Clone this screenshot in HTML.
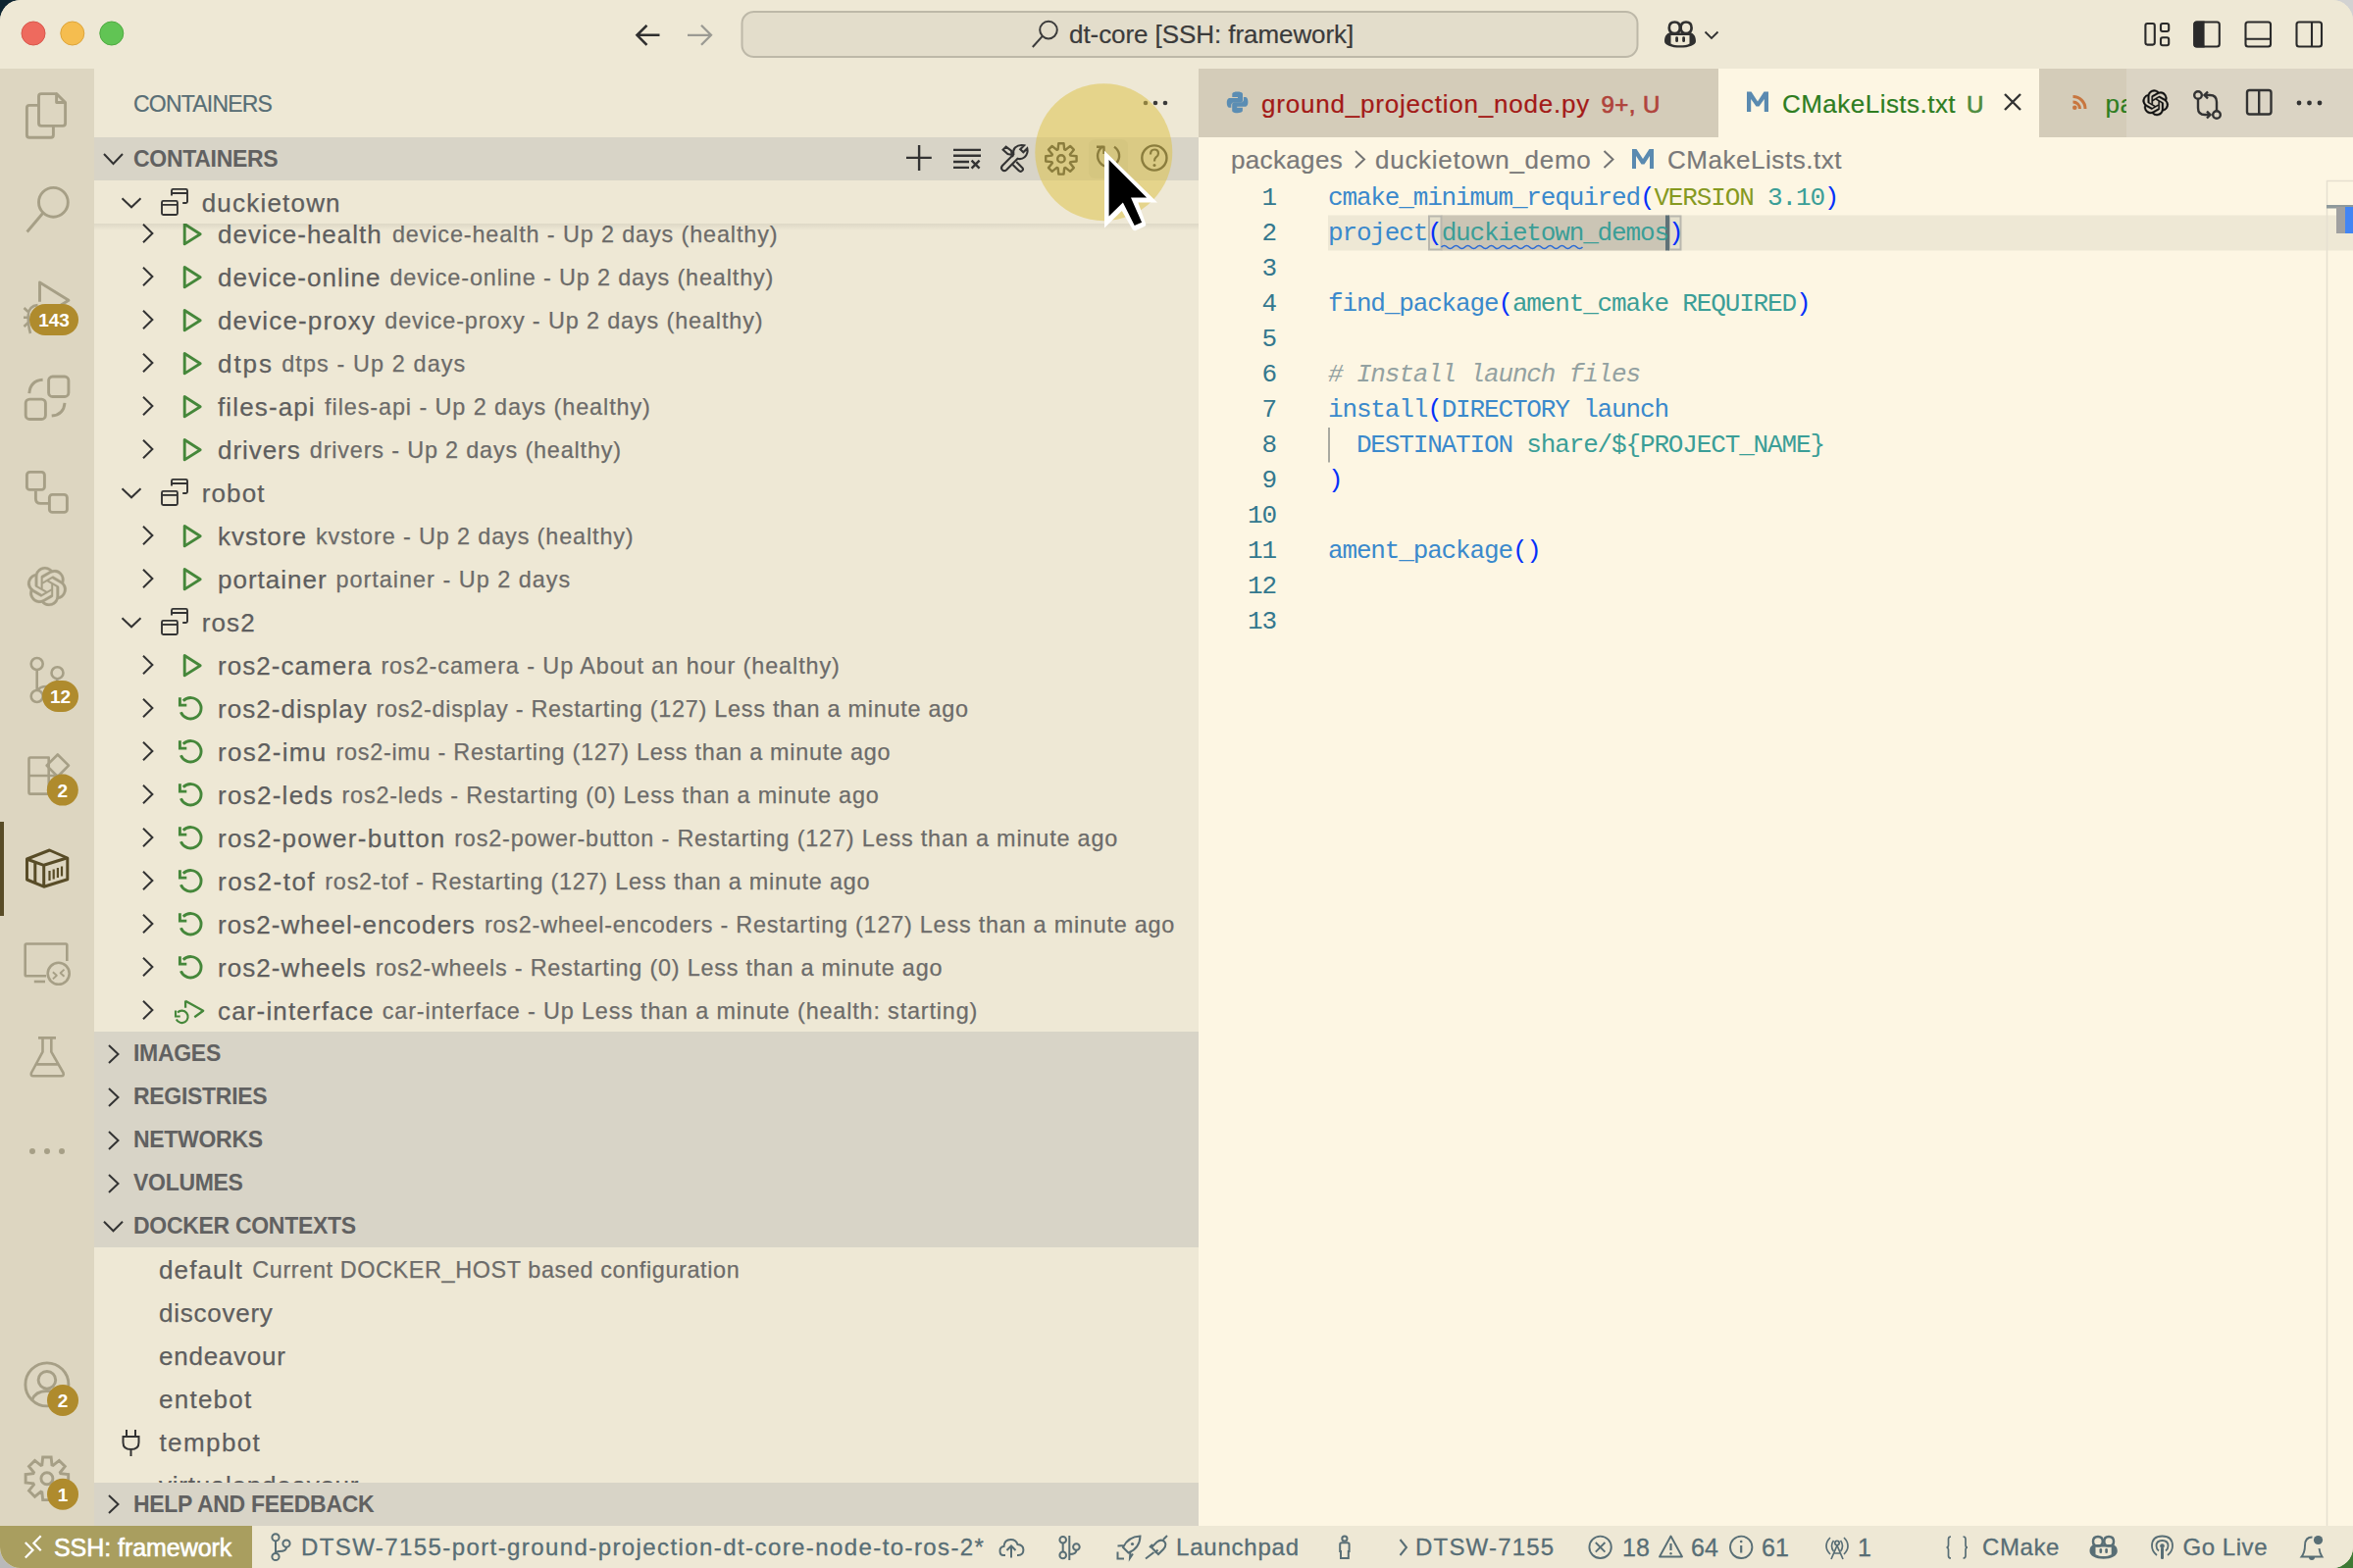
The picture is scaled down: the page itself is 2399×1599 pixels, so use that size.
<!DOCTYPE html>
<html><head><meta charset="utf-8">
<style>
html,body{margin:0;padding:0;}
body{width:2399px;height:1599px;overflow:hidden;position:relative;background:#c9c9c9;font-family:"Liberation Sans",sans-serif;}
.win{position:absolute;left:0;top:0;width:2399px;height:1599px;border-radius:21px;overflow:hidden;background:#EEE8D5;}
.abs{position:absolute;}
.t{position:absolute;white-space:nowrap;-webkit-text-stroke:0.2px currentColor;}
#titlebar{left:0;top:0;width:2399px;height:70px;background:#EEE8D5;}
#actbar{left:0;top:70px;width:96px;height:1486px;background:#DDD6C1;}
#sidebar{left:96px;top:70px;width:1126px;height:1486px;background:#EEE8D5;}
#editor{left:1222px;top:70px;width:1177px;height:1486px;background:#FDF6E3;}
#tabs{left:1222px;top:70px;width:1177px;height:70px;background:#DBD4C2;}
#status{left:0;top:1556px;width:2399px;height:43px;background:#EEE8D5;}
.sech{position:absolute;left:96px;width:1126px;height:44px;background:#D8D4C7;}
.sech .lbl{position:absolute;left:40px;top:0;line-height:44px;font-size:23px;font-weight:bold;color:#616161;letter-spacing:-0.3px;}
.row{position:absolute;left:96px;width:1126px;height:44px;line-height:44px;font-size:26px;color:#5E5E5E;white-space:nowrap;-webkit-text-stroke:0.25px currentColor;}
.row .l{position:absolute;top:1px;letter-spacing:0.75px;}
.row .dd{font-size:23.4px;line-height:45.8px;opacity:0.9;}
.row .d{font-size:23.4px;letter-spacing:0.8px;opacity:0.9;margin-left:11px;}
.code{position:absolute;left:1354px;font-family:"Liberation Mono",monospace;font-size:26px;letter-spacing:-1.15px;line-height:36px;white-space:pre;color:#657B83;}
.ln{position:absolute;left:1222px;width:80px;text-align:right;font-family:"Liberation Mono",monospace;font-size:26px;letter-spacing:-1.15px;line-height:36px;color:#34788E;}
.code .fn{color:#3A89CC}.code .br{color:#0431FA}.code .kw{color:#86991F}.code .nu{color:#3B9E97}.code .cm{color:#93A1A1;font-style:italic}
.st{position:absolute;top:1556px;line-height:44px;font-size:24px;color:#586E75;white-space:nowrap;-webkit-text-stroke:0.3px currentColor;}
</style></head>
<body>
<div class="abs" style="left:0;top:0;width:40px;height:40px;background:#0E2531"></div>
<div class="abs" style="left:2359px;top:0;width:40px;height:40px;background:#D2D2D2"></div>
<div class="abs" style="left:0;top:1559px;width:40px;height:40px;background:#B9B9B9"></div>
<div class="abs" style="left:2359px;top:1559px;width:40px;height:40px;background:#3E7A34"></div>
<div class="win">
<div id="titlebar" class="abs"></div>
<div id="actbar" class="abs"></div>
<div id="sidebar" class="abs"></div>
<div id="editor" class="abs"></div>
<div id="tabs" class="abs"></div>
<div id="status" class="abs"></div>
<!-- TITLE BAR -->
<svg class="abs" style="left:0;top:0" width="2399" height="70" viewBox="0 0 2399 70">
 <circle cx="34" cy="34" r="12" fill="#EE6A5E" stroke="#D8584D" stroke-width="1"/>
 <circle cx="73.8" cy="34" r="12" fill="#F5BD4F" stroke="#DDA43A" stroke-width="1"/>
 <circle cx="113.8" cy="34" r="12" fill="#61C454" stroke="#4EAA40" stroke-width="1"/>
 <g fill="none" stroke="#2F2F2F" stroke-width="2.6" stroke-linecap="butt">
  <path d="M672.5 35.8 H650 M659.5 25.8 L649.5 35.8 L659.5 45.8"/>
 </g>
 <g fill="none" stroke="#9B9A93" stroke-width="2.3">
  <path d="M701 35.8 H724.5 M715 25.8 L725 35.8 L715 45.8"/>
 </g>
 <rect x="756.5" y="12" width="913" height="46" rx="12" fill="#E3DDCB" stroke="#BDB8A8" stroke-width="2"/>
 <g fill="none" stroke="#3B3B3B" stroke-width="2">
  <circle cx="1069" cy="30.6" r="8.8"/>
  <path d="M1062.8 36.8 L1052.8 48"/>
 </g>
 <!-- copilot -->
 <g fill="#303030">
  <path d="M1697 42 C1697 35 1701 33.5 1703 33.5 L1723 33.5 C1725 33.5 1729 35 1729 42 C1729 46 1722 48.6 1713 48.6 C1704 48.6 1697 46 1697 42 Z M1703.5 36 V44.5 C1706 46 1709 46.3 1713 46.3 C1717 46.3 1720 46 1722.5 44.5 V36 Z"/>
  <rect x="1708.2" y="37.3" width="2.8" height="5.8" rx="1.4"/>
  <rect x="1715.2" y="37.3" width="2.8" height="5.8" rx="1.4"/>
 </g>
 <g fill="none" stroke="#303030" stroke-width="2.7">
  <path d="M1707.5 22.5 C1711.5 22.5 1712.8 24.5 1712.8 28.5 C1712.8 32.5 1711 34 1707.5 34 C1703.8 34 1701.8 32.5 1701.8 28.5 C1701.8 24.5 1703.5 22.5 1707.5 22.5 Z"/>
  <path d="M1719 22.5 C1723 22.5 1724.6 24.5 1724.6 28.5 C1724.6 32.5 1722.6 34 1719 34 C1715.5 34 1713.6 32.5 1713.6 28.5 C1713.6 24.5 1715 22.5 1719 22.5 Z"/>
 </g>
 <path d="M1738.5 32.5 L1745 39 L1751.5 32.5" fill="none" stroke="#303030" stroke-width="1.8"/>
 <!-- layout icons -->
 <g fill="none" stroke="#2A2A2A" stroke-width="2.1">
  <rect x="2187.4" y="24" width="9.4" height="21.6" rx="2"/>
  <rect x="2203" y="24" width="8.2" height="8" rx="2"/>
  <rect x="2203" y="38.2" width="8.2" height="8" rx="2"/>
  <rect x="2237.3" y="22.5" width="25.5" height="25" rx="2.5"/>
  <rect x="2289.5" y="22.5" width="25.5" height="25" rx="2.5"/>
  <path d="M2289.5 39.7 H2315"/>
  <rect x="2341.5" y="22.5" width="25.5" height="25" rx="2.5"/>
  <path d="M2357 22.5 V47.5"/>
 </g>
 <path d="M2247.6 21.5 H2239.8 Q2236.3 21.5 2236.3 25 V45 Q2236.3 48.5 2239.8 48.5 H2247.6 Z" fill="#2A2A2A"/>
</svg>
<div class="t" style="left:1090px;top:0;line-height:71px;font-size:26px;color:#3B3B3B;letter-spacing:-0.07px">dt-core [SSH: framework]</div>

<!-- ACTIVITY BAR -->
<svg class="abs" style="left:0;top:70px" width="96" height="1486" viewBox="0 70 96 1486">
 <g fill="none" stroke="#A69F86" stroke-width="2.9" stroke-linejoin="round">
  <!-- explorer -->
  <path d="M39.5 107.4 H30 Q27.4 107.4 27.4 110 V137.7 Q27.4 140.3 30 140.3 H51.8 Q54.4 140.3 54.4 137.7 V128.4"/>
  <path d="M57.6 95.6 H42.1 Q39.5 95.6 39.5 98.2 V125.8 Q39.5 128.4 42.1 128.4 H64 Q66.6 128.4 66.6 125.8 V104.5 L57.6 95.6 V104.5 H66.6"/>
  <!-- search -->
  <circle cx="54.4" cy="206.3" r="14.9"/>
  <path d="M43.8 217.3 L27.6 236.5"/>
  <!-- run/debug -->
  <path d="M40.5 307.8 V288 L70 306.2 L54 316"/>
  <path d="M38.5 311 Q29.5 312 28.8 321 Q28.5 332 31 340" stroke-width="2.6"/>
  <path d="M24.5 314 L28.8 318 M24 323.8 H28.8 M24.5 333 L28.8 329" stroke-width="2.6"/>
  <!-- two squares with arcs -->
  <rect x="49.6" y="384" width="20.3" height="20.5" rx="4"/>
  <rect x="26.2" y="407.1" width="20.2" height="20.4" rx="4"/>
  <path d="M43.6 387.3 Q31 388 29.8 401.1"/>
  <path d="M66 410.8 Q65 423 52.7 424"/>
  <!-- hierarchy -->
  <rect x="27.4" y="481.4" width="18" height="18" rx="3"/>
  <rect x="50.4" y="504.4" width="18" height="18" rx="3"/>
  <path d="M36.4 500.6 V508.4 Q36.4 513.4 41.4 513.4 H50.4"/>
  <!-- chatgpt -->
  <path transform="translate(27.9,578) scale(1.667)" fill="#A69F86" stroke="#A69F86" stroke-width="0.15" d="M22.2819 9.8211a5.9847 5.9847 0 0 0-.5157-4.9108 6.0462 6.0462 0 0 0-6.5098-2.9A6.0651 6.0651 0 0 0 4.9807 4.1818a5.9847 5.9847 0 0 0-3.9977 2.9 6.0462 6.0462 0 0 0 .7427 7.0966 5.98 5.98 0 0 0 .511 4.9107 6.051 6.051 0 0 0 6.5146 2.9001A5.9847 5.9847 0 0 0 13.2599 24a6.0557 6.0557 0 0 0 5.7718-4.2058 5.9894 5.9894 0 0 0 3.9977-2.9001 6.0557 6.0557 0 0 0-.7475-7.0729zm-9.022 12.6081a4.4755 4.4755 0 0 1-2.8764-1.0408l.1419-.0804 4.7783-2.7582a.7948.7948 0 0 0 .3927-.6813v-6.7369l2.02 1.1686a.071.071 0 0 1 .038.052v5.5826a4.504 4.504 0 0 1-4.4945 4.4944zm-9.6607-4.1254a4.4708 4.4708 0 0 1-.5346-3.0137l.142.0852 4.783 2.7582a.7712.7712 0 0 0 .7806 0l5.8428-3.3685v2.3324a.0804.0804 0 0 1-.0332.0615L9.74 19.9502a4.4992 4.4992 0 0 1-6.1408-1.6464zM2.3408 7.8956a4.485 4.485 0 0 1 2.3655-1.9728V11.6a.7664.7664 0 0 0 .3879.6765l5.8144 3.3543-2.0201 1.1685a.0757.0757 0 0 1-.071 0l-4.8303-2.7865A4.504 4.504 0 0 1 2.3408 7.872zm16.5963 3.8558L13.1038 8.364 15.1192 7.2a.0757.0757 0 0 1 .071 0l4.8303 2.7913a4.4944 4.4944 0 0 1-.6765 8.1042v-5.6772a.79.79 0 0 0-.407-.667zm2.0107-3.0231l-.142-.0852-4.7735-2.7818a.7759.7759 0 0 0-.7854 0L9.409 9.2297V6.8974a.0662.0662 0 0 1 .0284-.0615l4.8303-2.7866a4.4992 4.4992 0 0 1 6.6802 4.66zM8.3065 12.863l-2.02-1.1638a.0804.0804 0 0 1-.038-.0567V6.0742a4.4992 4.4992 0 0 1 7.3757-3.4537l-.142.0805L8.704 5.459a.7948.7948 0 0 0-.3927.6813zm1.0976-2.3654l2.602-1.4998 2.6069 1.4998v2.9994l-2.5974 1.4997-2.6067-1.4997Z" stroke-linejoin="round"/>
  <!-- source control -->
  <g stroke-width="2.6">
   <circle cx="37.7" cy="677" r="6"/>
   <circle cx="58.5" cy="686.2" r="6"/>
   <circle cx="37.7" cy="710" r="6"/>
   <path d="M37.7 683 V704 M58.5 692.2 Q58 700 48 700 Q40 700 39 704"/>
  </g>
  <!-- extensions -->
  <path d="M29.5 791 H49.7 V772.5 H31 Q29.5 772.5 29.5 774 V808 Q29.5 809.6 31 809.6 H67 V791 H49.7 V809.6" stroke-width="2.6"/>
  <path d="M58.8 769.5 L70 780.7 L58.8 792 L47.6 780.7 Z" stroke-width="2.6"/>
  <!-- remote explorer -->
  <path d="M47 995.3 H27 Q25.7 995.3 25.7 994 V963.8 Q25.7 962.5 27 962.5 H67 Q68.3 962.5 68.3 963.8 V980" stroke-width="2.6"/>
  <path d="M34.8 1001 H46" stroke-width="2.6"/>
  <circle cx="59.7" cy="992.8" r="11" stroke-width="2.6"/>
  <path d="M53.9 991.2 L57.8 994.8 L53.9 998.4 M65.5 988.6 L61.6 992.2 L65.5 995.8" stroke-width="1.9"/>
  <!-- flask -->
  <path d="M39 1058.4 H57 M43.5 1058.4 V1072.7 L32 1094 Q31 1097.3 34 1097.3 H62.5 Q65.5 1097.3 64.5 1094 L52.3 1072.7 V1058.4 M37 1085.4 H59" stroke-width="2.6"/>
  <!-- accounts -->
  <circle cx="47.9" cy="1411.9" r="22" stroke-width="2.9"/>
  <circle cx="47.9" cy="1407.3" r="8.8" stroke-width="2.9"/>
  <path d="M32.5 1428 Q36 1418.5 47.9 1418.5 Q59 1418.5 63 1426" stroke-width="2.9"/>
  <!-- gear -->
  <g transform="translate(47.9,1507.8)" stroke-width="2.9">
   <path d="M-5.06 -13.91 L-4.24 -21.79 L4.24 -21.79 L5.06 -13.91 L6.25 -13.41 L12.41 -18.40 L18.40 -12.41 L13.41 -6.25 L13.91 -5.06 L21.79 -4.24 L21.79 4.24 L13.91 5.06 L13.41 6.25 L18.40 12.41 L12.41 18.40 L6.25 13.41 L5.06 13.91 L4.24 21.79 L-4.24 21.79 L-5.06 13.91 L-6.25 13.41 L-12.41 18.40 L-18.40 12.41 L-13.41 6.25 L-13.91 5.06 L-21.79 4.24 L-21.79 -4.24 L-13.91 -5.06 L-13.41 -6.25 L-18.40 -12.41 L-12.41 -18.40 L-6.25 -13.41 Z" stroke-linejoin="miter"/>
   <circle cx="0" cy="0" r="6"/>
  </g>
 </g>
 <g fill="#A69F86">
  <circle cx="33" cy="1173.9" r="3"/><circle cx="48" cy="1173.9" r="3"/><circle cx="63" cy="1173.9" r="3"/>
 </g>
 <!-- docker active -->
 <rect x="0" y="838" width="4" height="96" fill="#584C27"/>
 <g fill="none" stroke="#584C27" stroke-width="3" stroke-linejoin="round">
  <path d="M50.5 867 L27.5 876 V897 L44.7 904.2 L68.8 896.7 V875 Z"/>
  <path d="M28.5 876.5 L44.7 882.3 L68 875 M44.7 882.3 V904 M35.8 879 V900"/>
  <path d="M50.5 888 V898 M54.7 886.5 V896.5 M58.9 885 V895 M63 883.5 V893.5" stroke-width="2.2"/>
 </g>
 <!-- badges -->
 <g fill="#AF8B2D">
  <rect x="30" y="310" width="50" height="32" rx="16"/>
  <rect x="43" y="694" width="37" height="32" rx="16"/>
  <circle cx="63.8" cy="805.6" r="16"/>
  <circle cx="64" cy="1428" r="16"/>
  <circle cx="64" cy="1523.8" r="16"/>
 </g>
 <g fill="#FFFFFF" font-family="Liberation Sans" font-weight="bold" font-size="19" text-anchor="middle">
  <text x="55" y="332.5">143</text>
  <text x="61.5" y="716.5">12</text>
  <text x="63.8" y="812.5">2</text>
  <text x="64" y="1435">2</text>
  <text x="64" y="1530.5">1</text>
 </g>
</svg>

<!-- SIDEBAR HEADERS -->
<div class="t" style="left:136px;top:70px;line-height:73px;font-size:23px;color:#586E75;letter-spacing:-0.8px">CONTAINERS</div>
<svg class="abs" style="left:1150px;top:90px" width="50" height="30" viewBox="1150 90 50 30"><g fill="#3A3A3A"><circle cx="1168" cy="105" r="2.3"/><circle cx="1178" cy="105" r="2.3"/><circle cx="1188" cy="105" r="2.3"/></g></svg>
<div class="sech" style="top:140px"><span class="lbl">CONTAINERS</span></div>
<div class="sech" style="top:1052px"><span class="lbl">IMAGES</span></div>
<div class="sech" style="top:1096px"><span class="lbl">REGISTRIES</span></div>
<div class="sech" style="top:1140px"><span class="lbl">NETWORKS</span></div>
<div class="sech" style="top:1184px"><span class="lbl">VOLUMES</span></div>
<div class="sech" style="top:1228px"><span class="lbl">DOCKER CONTEXTS</span></div>
<div class="row" style="top:1272px"><span class="l" style="left:66px;letter-spacing:1.12px">default</span><span class="l dd" style="left:161.3px;letter-spacing:0.62px">Current DOCKER_HOST based configuration</span></div>
<div class="row" style="top:1316px"><span class="l" style="left:66px">discovery</span></div>
<div class="row" style="top:1360px"><span class="l" style="left:66px">endeavour</span></div>
<div class="row" style="top:1404px"><span class="l" style="left:66px;letter-spacing:1.25px">entebot</span></div>
<div class="row" style="top:1448px"><span class="l" style="left:66.5px;letter-spacing:1.4px">tempbot</span></div>
<div class="row" style="top:1492px"><span class="l" style="left:66px">virtualendeavour</span></div>
<div class="sech" style="top:1512px"><span class="lbl">HELP AND FEEDBACK</span></div>
<svg class="abs" style="left:0;top:0" width="1222" height="1556" viewBox="0 0 1222 1556">
 <g fill="none" stroke="#333" stroke-width="2">
  <path d="M106 157 L115.5 167 L125 157"/>
  <path d="M111 1066 L120.5 1075 L111 1084"/>
  <path d="M111 1110 L120.5 1119 L111 1128"/>
  <path d="M111 1154 L120.5 1163 L111 1172"/>
  <path d="M111 1198 L120.5 1207 L111 1216"/>
  <path d="M106 1245.8 L115.5 1255.3 L125 1245.8"/>
  <path d="M111 1525 L120.5 1534 L111 1543"/>
 </g>
 <!-- plug icon tempbot -->
 <g fill="none" stroke="#333" stroke-width="2">
  <path d="M129 1458 V1465 M138 1458 V1465 M125.5 1465 H141.5 V1471 Q141.5 1478 133.5 1478 Q125.5 1478 125.5 1471 Z M133.5 1478 V1485"/>
 </g>
 <!-- header actions -->
 <g fill="none" stroke="#333" stroke-width="2.4">
  <path d="M937.1 148 V174 M924 160.9 H949.8"/>
  <path d="M972 152.9 H1000 M972 158.8 H1000 M972 165 H988 M972 170.9 H988 M990.6 163.7 L998.6 171.7 M998.6 163.7 L990.6 171.7"/>
  <g transform="translate(1034.5,161.5) scale(0.88) translate(-1034.5,-161.5)" stroke-width="2.4"><path d="M1045.5 146.5 L1041 151 L1044.5 154.5 L1049 150 Q1050.5 156 1046 160 Q1042.5 163 1038 161.8 L1025 174.8 Q1022.5 177 1020.2 174.8 Q1018 172.5 1020.2 170 L1033.2 157 Q1032 152.5 1035 149 Q1039.5 145 1045.5 146.5 Z" />
  <path d="M1021 151.5 L1024.5 148 L1030.5 152.5 L1031.5 157.5 L1026.5 156.5 Z M1030.5 157 L1033 159.5" />
  <path d="M1036.5 165.5 L1043.5 172.5 Q1045 174.5 1043 176 Q1041 177.5 1039.3 175.8 L1032.3 168.8" /></g>
 </g>
</svg>

<!-- SIDEBAR TREE -->
<div class="row" style="top:216px"><span class="l" style="left:126px;letter-spacing:1.01px">device-health</span><span class="l dd" style="left:303.9px;letter-spacing:0.88px">device-health - Up 2 days (healthy)</span></div>
<div class="row" style="top:260px"><span class="l" style="left:126px;letter-spacing:1.03px">device-online</span><span class="l dd" style="left:301.4px;letter-spacing:0.87px">device-online - Up 2 days (healthy)</span></div>
<div class="row" style="top:304px"><span class="l" style="left:126px;letter-spacing:1.14px">device-proxy</span><span class="l dd" style="left:296.3px;letter-spacing:0.88px">device-proxy - Up 2 days (healthy)</span></div>
<div class="row" style="top:348px"><span class="l" style="left:126px;letter-spacing:1.97px">dtps</span><span class="l dd" style="left:191.2px;letter-spacing:1.12px">dtps - Up 2 days</span></div>
<div class="row" style="top:392px"><span class="l" style="left:126px;letter-spacing:1.13px">files-api</span><span class="l dd" style="left:235.1px;letter-spacing:0.92px">files-api - Up 2 days (healthy)</span></div>
<div class="row" style="top:436px"><span class="l" style="left:126px;letter-spacing:0.95px">drivers</span><span class="l dd" style="left:219.8px;letter-spacing:0.84px">drivers - Up 2 days (healthy)</span></div>
<div class="row" style="top:480px"><span class="l" style="left:109.7px;letter-spacing:1.15px">robot</span></div>
<div class="row" style="top:524px"><span class="l" style="left:126px;letter-spacing:1.02px">kvstore</span><span class="l dd" style="left:226.0px;letter-spacing:0.88px">kvstore - Up 2 days (healthy)</span></div>
<div class="row" style="top:568px"><span class="l" style="left:126px;letter-spacing:1.01px">portainer</span><span class="l dd" style="left:246.5px;letter-spacing:1.01px">portainer - Up 2 days</span></div>
<div class="row" style="top:612px"><span class="l" style="left:109.7px;letter-spacing:1.15px">ros2</span></div>
<div class="row" style="top:656px"><span class="l" style="left:126px;letter-spacing:1.05px">ros2-camera</span><span class="l dd" style="left:292.4px;letter-spacing:0.92px">ros2-camera - Up About an hour (healthy)</span></div>
<div class="row" style="top:700px"><span class="l" style="left:126px;letter-spacing:1.06px">ros2-display</span><span class="l dd" style="left:287.5px;letter-spacing:0.74px">ros2-display - Restarting (127) Less than a minute ago</span></div>
<div class="row" style="top:744px"><span class="l" style="left:126px;letter-spacing:1.31px">ros2-imu</span><span class="l dd" style="left:246.5px;letter-spacing:0.73px">ros2-imu - Restarting (127) Less than a minute ago</span></div>
<div class="row" style="top:788px"><span class="l" style="left:126px;letter-spacing:1.27px">ros2-leds</span><span class="l dd" style="left:252.5px;letter-spacing:0.81px">ros2-leds - Restarting (0) Less than a minute ago</span></div>
<div class="row" style="top:832px"><span class="l" style="left:126px;letter-spacing:1.27px">ros2-power-button</span><span class="l dd" style="left:367.2px;letter-spacing:0.83px">ros2-power-button - Restarting (127) Less than a minute ago</span></div>
<div class="row" style="top:876px"><span class="l" style="left:126px;letter-spacing:1.49px">ros2-tof</span><span class="l dd" style="left:235.3px;letter-spacing:0.77px">ros2-tof - Restarting (127) Less than a minute ago</span></div>
<div class="row" style="top:920px"><span class="l" style="left:126px;letter-spacing:1.06px">ros2-wheel-encoders</span><span class="l dd" style="left:398.0px;letter-spacing:0.78px">ros2-wheel-encoders - Restarting (127) Less than a minute ago</span></div>
<div class="row" style="top:964px"><span class="l" style="left:126px;letter-spacing:1.07px">ros2-wheels</span><span class="l dd" style="left:286.7px;letter-spacing:0.79px">ros2-wheels - Restarting (0) Less than a minute ago</span></div>
<div class="row" style="top:1008px"><span class="l" style="left:126px;letter-spacing:1.16px">car-interface</span><span class="l dd" style="left:293.8px;letter-spacing:0.84px">car-interface - Up Less than a minute (health: starting)</span></div>
<svg class="abs" style="left:0;top:0" width="1222" height="1556" viewBox="0 0 1222 1556">
<g stroke="#333" stroke-width="2" fill="none"><path d="M146 228.7 L155.4 238 L146 247.3"/></g>
<path d="M188.2 228.5 V248.9 L204.2 238.7 Z" fill="none" stroke="#45873A" stroke-width="2.9" stroke-linejoin="round"/>
<g stroke="#333" stroke-width="2" fill="none"><path d="M146 272.7 L155.4 282 L146 291.3"/></g>
<path d="M188.2 272.5 V292.9 L204.2 282.7 Z" fill="none" stroke="#45873A" stroke-width="2.9" stroke-linejoin="round"/>
<g stroke="#333" stroke-width="2" fill="none"><path d="M146 316.7 L155.4 326 L146 335.3"/></g>
<path d="M188.2 316.5 V336.9 L204.2 326.7 Z" fill="none" stroke="#45873A" stroke-width="2.9" stroke-linejoin="round"/>
<g stroke="#333" stroke-width="2" fill="none"><path d="M146 360.7 L155.4 370 L146 379.3"/></g>
<path d="M188.2 360.5 V380.9 L204.2 370.7 Z" fill="none" stroke="#45873A" stroke-width="2.9" stroke-linejoin="round"/>
<g stroke="#333" stroke-width="2" fill="none"><path d="M146 404.7 L155.4 414 L146 423.3"/></g>
<path d="M188.2 404.5 V424.9 L204.2 414.7 Z" fill="none" stroke="#45873A" stroke-width="2.9" stroke-linejoin="round"/>
<g stroke="#333" stroke-width="2" fill="none"><path d="M146 448.7 L155.4 458 L146 467.3"/></g>
<path d="M188.2 448.5 V468.9 L204.2 458.7 Z" fill="none" stroke="#45873A" stroke-width="2.9" stroke-linejoin="round"/>
<g stroke="#333" stroke-width="2" fill="none"><path d="M124.5 498.3 L134.0 507.3 L143.5 498.3"/></g>
<g stroke="#333" stroke-width="1.9"><path d="M175 495.4 V490.4 Q175 488.9 176.5 488.9 H189.5 Q191 488.9 191 490.4 V501.5 Q191 503 189.5 503 H186.2 M175 493 H191" fill="none"/><rect x="165" y="500.9" width="15.9" height="14.1" rx="1.5" fill="none"/><path d="M165 504.9 H180.9"/></g>
<g stroke="#333" stroke-width="2" fill="none"><path d="M146 536.7 L155.4 546 L146 555.3"/></g>
<path d="M188.2 536.5 V556.9 L204.2 546.7 Z" fill="none" stroke="#45873A" stroke-width="2.9" stroke-linejoin="round"/>
<g stroke="#333" stroke-width="2" fill="none"><path d="M146 580.7 L155.4 590 L146 599.3"/></g>
<path d="M188.2 580.5 V600.9 L204.2 590.7 Z" fill="none" stroke="#45873A" stroke-width="2.9" stroke-linejoin="round"/>
<g stroke="#333" stroke-width="2" fill="none"><path d="M124.5 630.3 L134.0 639.3 L143.5 630.3"/></g>
<g stroke="#333" stroke-width="1.9"><path d="M175 627.4 V622.4 Q175 620.9 176.5 620.9 H189.5 Q191 620.9 191 622.4 V633.5 Q191 635 189.5 635 H186.2 M175 625 H191" fill="none"/><rect x="165" y="632.9" width="15.9" height="14.1" rx="1.5" fill="none"/><path d="M165 636.9 H180.9"/></g>
<g stroke="#333" stroke-width="2" fill="none"><path d="M146 668.7 L155.4 678 L146 687.3"/></g>
<path d="M188.2 668.5 V688.9 L204.2 678.7 Z" fill="none" stroke="#45873A" stroke-width="2.9" stroke-linejoin="round"/>
<g stroke="#333" stroke-width="2" fill="none"><path d="M146 712.7 L155.4 722 L146 731.3"/></g>
<path d="M184.4 726.2 A10.7 10.7 0 1 0 186.8 714.7" fill="none" stroke="#45873A" stroke-width="2.9"/>
<path d="M183.4 711.2 V719.1 H190.3" fill="none" stroke="#45873A" stroke-width="2.9"/>
<g stroke="#333" stroke-width="2" fill="none"><path d="M146 756.7 L155.4 766 L146 775.3"/></g>
<path d="M184.4 770.2 A10.7 10.7 0 1 0 186.8 758.7" fill="none" stroke="#45873A" stroke-width="2.9"/>
<path d="M183.4 755.2 V763.1 H190.3" fill="none" stroke="#45873A" stroke-width="2.9"/>
<g stroke="#333" stroke-width="2" fill="none"><path d="M146 800.7 L155.4 810 L146 819.3"/></g>
<path d="M184.4 814.2 A10.7 10.7 0 1 0 186.8 802.7" fill="none" stroke="#45873A" stroke-width="2.9"/>
<path d="M183.4 799.2 V807.1 H190.3" fill="none" stroke="#45873A" stroke-width="2.9"/>
<g stroke="#333" stroke-width="2" fill="none"><path d="M146 844.7 L155.4 854 L146 863.3"/></g>
<path d="M184.4 858.2 A10.7 10.7 0 1 0 186.8 846.7" fill="none" stroke="#45873A" stroke-width="2.9"/>
<path d="M183.4 843.2 V851.1 H190.3" fill="none" stroke="#45873A" stroke-width="2.9"/>
<g stroke="#333" stroke-width="2" fill="none"><path d="M146 888.7 L155.4 898 L146 907.3"/></g>
<path d="M184.4 902.2 A10.7 10.7 0 1 0 186.8 890.7" fill="none" stroke="#45873A" stroke-width="2.9"/>
<path d="M183.4 887.2 V895.1 H190.3" fill="none" stroke="#45873A" stroke-width="2.9"/>
<g stroke="#333" stroke-width="2" fill="none"><path d="M146 932.7 L155.4 942 L146 951.3"/></g>
<path d="M184.4 946.2 A10.7 10.7 0 1 0 186.8 934.7" fill="none" stroke="#45873A" stroke-width="2.9"/>
<path d="M183.4 931.2 V939.1 H190.3" fill="none" stroke="#45873A" stroke-width="2.9"/>
<g stroke="#333" stroke-width="2" fill="none"><path d="M146 976.7 L155.4 986 L146 995.3"/></g>
<path d="M184.4 990.2 A10.7 10.7 0 1 0 186.8 978.7" fill="none" stroke="#45873A" stroke-width="2.9"/>
<path d="M183.4 975.2 V983.1 H190.3" fill="none" stroke="#45873A" stroke-width="2.9"/>
<g stroke="#333" stroke-width="2" fill="none"><path d="M146 1020.7 L155.4 1030 L146 1039.3"/></g>
<path d="M189.1 1020.8 L207.2 1030.8 L198.3 1037.2 M189.1 1020.6 V1027.8" fill="none" stroke="#45873A" stroke-width="2.3" stroke-linejoin="round"/>
<path d="M179.8 1039.5 A6.2 6.2 0 1 0 181 1032.5" fill="none" stroke="#45873A" stroke-width="2.1"/>
<path d="M179 1030.5 V1036.5 H183.7" fill="none" stroke="#45873A" stroke-width="2.1"/>
</svg>
<div class="row" style="top:184px;background:#EEE8D5;height:44px"><span class="l" style="left:109.7px;letter-spacing:1.2px">duckietown</span></div>
<div class="abs" style="left:96px;top:228px;width:1126px;height:7px;background:linear-gradient(rgba(0,0,0,0.07),rgba(0,0,0,0))"></div>
<svg class="abs" style="left:0;top:0" width="1222" height="300" viewBox="0 0 1222 300"><g stroke="#333" stroke-width="2" fill="none"><path d="M124.5 202.3 L134.0 211.3 L143.5 202.3"/></g><g stroke="#333" stroke-width="1.9"><path d="M175 199.4 V194.4 Q175 192.9 176.5 192.9 H189.5 Q191 192.9 191 194.4 V205.5 Q191 207 189.5 207 H186.2 M175 197 H191" fill="none"/><rect x="165" y="204.9" width="15.9" height="14.1" rx="1.5" fill="none"/><path d="M165 208.9 H180.9"/></g></svg>
<!-- EDITOR TABS -->
<div class="abs" style="left:1222px;top:70px;width:530px;height:70px;background:#D4CCB9"></div>
<div class="abs" style="left:1752px;top:70px;width:327px;height:70px;background:#FDF6E3"></div>
<div class="abs" style="left:2079px;top:70px;width:89px;height:70px;background:#D4CCB9;overflow:hidden">
 <div class="t" style="left:67.5px;top:0;line-height:73px;font-size:26px;color:#2E7D1F;letter-spacing:0.5px">package.xml</div>
</div>
<div class="abs" style="left:2168px;top:70px;width:231px;height:70px;background:#DBD4C4"></div>
<div class="t" style="left:1286px;top:70px;line-height:73px;font-size:26px;color:#A31A17;letter-spacing:0.8px">ground_projection_node.py</div>
<div class="t" style="left:1632.5px;top:70px;line-height:73px;font-size:24px;color:#B0443C;letter-spacing:0.45px;-webkit-text-stroke:0.7px #B0443C">9+, U</div>
<div class="t" style="left:1817px;top:70px;line-height:73px;font-size:26px;color:#2E7D1F;letter-spacing:0.47px">CMakeLists.txt</div>
<div class="t" style="left:2005px;top:70px;line-height:73px;font-size:24px;color:#4E8C3E;-webkit-text-stroke:0.7px #4E8C3E">U</div>
<svg class="abs" style="left:1222px;top:70px" width="1177" height="70" viewBox="1222 70 1177 70">
 <!-- python icon -->
 <g fill="#5B8DB3">
  <path d="M1261.5 93.6 C1256 93.6 1256.3 96 1256.3 96 V99 H1262 V100 H1254 C1254 100 1250.8 99.6 1250.8 104.8 C1250.8 110 1253.6 109.8 1253.6 109.8 H1255.3 V107.4 C1255.3 107.4 1255.2 104.6 1258 104.6 H1264.5 C1264.5 104.6 1267 104.6 1267 102.2 V96.2 C1267 96.2 1267.4 93.6 1261.5 93.6 Z"/>
  <path d="M1261.7 115.2 C1267.2 115.2 1266.9 112.8 1266.9 112.8 V109.8 H1261.2 V108.8 H1269.2 C1269.2 108.8 1272.4 109.2 1272.4 104 C1272.4 98.8 1269.6 99 1269.6 99 H1267.9 V101.4 C1267.9 101.4 1268 104.2 1265.2 104.2 H1258.7 C1258.7 104.2 1256.2 104.2 1256.2 106.6 V112.6 C1256.2 112.6 1255.8 115.2 1261.7 115.2 Z"/>
 </g>
 <!-- M icons -->
 <path d="M1781 114 V93.5 H1785.5 L1792 103.5 L1798.5 93.5 H1803 V114 H1798.8 V101 L1793.5 108.5 H1790.5 L1785.2 101 V114 Z" fill="#5A8AB0"/>
 <!-- close x -->
 <path d="M2044 96 L2060 112 M2060 96 L2044 112" stroke="#333" stroke-width="2.4" fill="none"/>
 <!-- rss -->
 <g fill="none" stroke="#C8763F" stroke-width="3">
  <path d="M2113.5 104 A7 7 0 0 1 2120.5 111"/>
  <path d="M2113.5 98.5 A12.5 12.5 0 0 1 2126 111"/>
 </g>
 <circle cx="2115.3" cy="109.8" r="2.3" fill="#C8763F"/>
 <!-- chatgpt -->
 <path transform="translate(2184.5,91.6) scale(1.1)" d="M22.2819 9.8211a5.9847 5.9847 0 0 0-.5157-4.9108 6.0462 6.0462 0 0 0-6.5098-2.9A6.0651 6.0651 0 0 0 4.9807 4.1818a5.9847 5.9847 0 0 0-3.9977 2.9 6.0462 6.0462 0 0 0 .7427 7.0966 5.98 5.98 0 0 0 .511 4.9107 6.051 6.051 0 0 0 6.5146 2.9001A5.9847 5.9847 0 0 0 13.2599 24a6.0557 6.0557 0 0 0 5.7718-4.2058 5.9894 5.9894 0 0 0 3.9977-2.9001 6.0557 6.0557 0 0 0-.7475-7.0729zm-9.022 12.6081a4.4755 4.4755 0 0 1-2.8764-1.0408l.1419-.0804 4.7783-2.7582a.7948.7948 0 0 0 .3927-.6813v-6.7369l2.02 1.1686a.071.071 0 0 1 .038.052v5.5826a4.504 4.504 0 0 1-4.4945 4.4944zm-9.6607-4.1254a4.4708 4.4708 0 0 1-.5346-3.0137l.142.0852 4.783 2.7582a.7712.7712 0 0 0 .7806 0l5.8428-3.3685v2.3324a.0804.0804 0 0 1-.0332.0615L9.74 19.9502a4.4992 4.4992 0 0 1-6.1408-1.6464zM2.3408 7.8956a4.485 4.485 0 0 1 2.3655-1.9728V11.6a.7664.7664 0 0 0 .3879.6765l5.8144 3.3543-2.0201 1.1685a.0757.0757 0 0 1-.071 0l-4.8303-2.7865A4.504 4.504 0 0 1 2.3408 7.872zm16.5963 3.8558L13.1038 8.364 15.1192 7.2a.0757.0757 0 0 1 .071 0l4.8303 2.7913a4.4944 4.4944 0 0 1-.6765 8.1042v-5.6772a.79.79 0 0 0-.407-.667zm2.0107-3.0231l-.142-.0852-4.7735-2.7818a.7759.7759 0 0 0-.7854 0L9.409 9.2297V6.8974a.0662.0662 0 0 1 .0284-.0615l4.8303-2.7866a4.4992 4.4992 0 0 1 6.6802 4.66zM8.3065 12.863l-2.02-1.1638a.0804.0804 0 0 1-.038-.0567V6.0742a4.4992 4.4992 0 0 1 7.3757-3.4537l-.142.0805L8.704 5.459a.7948.7948 0 0 0-.3927.6813zm1.0976-2.3654l2.602-1.4998 2.6069 1.4998v2.9994l-2.5974 1.4997-2.6067-1.4997Z" fill="#111" stroke="#111" stroke-width="0.35" stroke-linejoin="round"/>
 <!-- compare changes icon -->
 <g fill="none" stroke="#333" stroke-width="2.4">
  <circle cx="2241" cy="97" r="3.8"/>
  <circle cx="2260" cy="117" r="3.8"/>
  <path d="M2241 101 V110 Q2241 117 2248 117 H2252 M2250 113.5 L2253.5 117 L2250 120.5"/>
  <path d="M2260 113 V104 Q2260 97 2253 97 H2249 M2251 93.5 L2247.5 97 L2251 100.5"/>
  <rect x="2291" y="92" width="24.5" height="24.5" rx="2.5"/>
  <path d="M2303.2 92 V116.5"/>
 </g>
 <g fill="#333"><circle cx="2344" cy="105" r="2.4"/><circle cx="2354.5" cy="105" r="2.4"/><circle cx="2365" cy="105" r="2.4"/></g>
</svg>
<!-- BREADCRUMBS -->
<div class="t" style="left:1255px;top:141px;line-height:44px;font-size:26px;color:#797979;letter-spacing:0.34px">packages</div>
<div class="t" style="left:1402px;top:141px;line-height:44px;font-size:26px;color:#797979;letter-spacing:0.73px">duckietown_demo</div>
<div class="t" style="left:1700px;top:141px;line-height:44px;font-size:26px;color:#797979;letter-spacing:0.54px">CMakeLists.txt</div>
<svg class="abs" style="left:1222px;top:140px" width="1177" height="1416" viewBox="1222 140 1177 1416">
 <g fill="none" stroke="#737373" stroke-width="2">
  <path d="M1382 154 L1391 162.5 L1382 171"/>
  <path d="M1635.5 154 L1644.5 162.5 L1635.5 171"/>
 </g>
 <path d="M1664 172 V152 H1668.5 L1675 162 L1681.5 152 H1686 V172 H1682 V159 L1676.5 167.5 H1673.5 L1668 159 V172 Z" fill="#5A8AB0"/>
 <!-- current line highlight & selection -->
 <rect x="1354" y="219.5" width="1045" height="36" fill="#EEE8D5"/>
 <rect x="1469.5" y="219.5" width="229" height="36" fill="#CBC5B5"/>
 <rect x="1457" y="220.5" width="12.5" height="34" fill="#E4E0CC" stroke="#B9B7AE" stroke-width="2"/>
 <rect x="1702" y="220.5" width="11.5" height="34" fill="#E4E0CC" stroke="#B9B7AE" stroke-width="2"/>
 <rect x="1698" y="219.5" width="4" height="36" fill="#5F7177"/>
 <!-- indent guide -->
 <path d="M1355 436 V471.5" stroke="#A9A9A0" stroke-width="2"/>
 <!-- overview ruler -->
 <path d="M2372.5 184 V1556 M2372 184.5 H2399" stroke="#E6E0D0" stroke-width="1.5" fill="none"/>
 <rect x="2372" y="209" width="27" height="3.5" fill="#8E999B"/>
 <rect x="2382" y="211" width="9" height="27" fill="#A0A0A0"/>
 <rect x="2391" y="211" width="8" height="27" fill="#4285F4"/>
</svg>
<!-- LINE NUMBERS -->
<div class="ln" style="top:183.5px;left:1222px;width:79px">1<br>2<br>3<br>4<br>5<br>6<br>7<br>8<br>9<br>10<br>11<br>12<br>13</div>
<!-- CODE -->
<div class="code" style="top:183.5px"><span class="fn">cmake_minimum_required</span><span class="br">(</span><span class="kw">VERSION</span> <span class="nu">3.10</span><span class="br">)</span>
<span class="fn">project</span><span class="br">(</span><span class="nu">duckietown_demos</span><span class="br">)</span>

<span class="fn">find_package</span><span class="br">(</span><span class="nu">ament_cmake REQUIRED</span><span class="br">)</span>

<span class="cm"># Install launch files</span>
<span class="fn">install</span><span class="br">(</span><span class="fn">DIRECTORY launch</span>
  <span class="fn">DESTINATION</span> <span class="nu">share/${PROJECT_NAME}</span>
<span class="br">)</span>

<span class="fn">ament_package</span><span class="br">()</span>
</div>
<svg class="abs" style="left:1460px;top:245px" width="160" height="14" viewBox="1460 245 160 14">
 <path d="M1469.5 252 q3 -3 6 0 t6 0 t6 0 t6 0 t6 0 t6 0 t6 0 t6 0 t6 0 t6 0 t6 0 t6 0 t6 0 t6 0 t6 0 t6 0 t6 0 t6 0 t6 0 t6 0 t6 0 t6 0 t6 0 t6 0" fill="none" stroke="#2C6BD6" stroke-width="1.6"/>
</svg>

<!-- STATUS BAR -->
<div class="abs" style="left:0;top:1556px;width:257px;height:43px;background:#A99E5F"></div>
<div class="st" style="left:55px;color:#FFFFFF;font-size:25px;letter-spacing:-0.05px;-webkit-text-stroke:0.6px #FFFFFF">SSH: framework</div>
<div class="st" style="left:307px;letter-spacing:1.41px">DTSW-7155-port-ground-projection-dt-core-node-to-ros-2*</div>
<div class="st" style="left:1199px;letter-spacing:0.78px">Launchpad</div>
<div class="st" style="left:1443px;letter-spacing:1.2px">DTSW-7155</div>
<div class="st" style="left:1654px;font-size:25px">18</div>
<div class="st" style="left:1724px;font-size:25px">64</div>
<div class="st" style="left:1796px;font-size:25px">61</div>
<div class="st" style="left:1894px;font-size:25px">1</div>
<div class="st" style="left:2021px;letter-spacing:0.6px">CMake</div>
<div class="st" style="left:2225.5px;letter-spacing:0.55px">Go Live</div>
<svg class="abs" style="left:0;top:1556px" width="2399" height="43" viewBox="0 1556 2399 43">
 <g fill="none" stroke="#FFFFFF" stroke-width="2.2">
  <path d="M25.8 1573 L33.5 1580.7 L25.8 1588.5 M41.7 1566.3 L34.4 1573.7 L41.7 1581.2"/>
 </g>
 <g fill="none" stroke="#586E75" stroke-width="2">
  <!-- branch -->
  <circle cx="281" cy="1567.8" r="3.6"/><circle cx="292" cy="1574.1" r="3.6"/><circle cx="281" cy="1587.5" r="3.6"/>
  <path d="M281 1571.4 V1583.9 M292 1577.7 Q292 1582 285 1582 Q281.5 1582 281 1584"/>
  <!-- cloud upload -->
  <path d="M1025 1586 H1023 Q1019.5 1586 1019.5 1581.5 Q1019.5 1577.5 1023.5 1577 Q1024 1570 1030.5 1570 Q1036 1570 1037.5 1575 Q1043.4 1575.5 1043.4 1580.5 Q1043.4 1586 1038 1586 H1037"/>
  <path d="M1031 1588.5 V1576.5 M1026.5 1581 L1031 1576.5 L1035.5 1581"/>
  <!-- git graph -->
  <circle cx="1083.7" cy="1570.2" r="3.3"/><circle cx="1083.7" cy="1585.9" r="3.3"/><circle cx="1097.4" cy="1577.5" r="3.3"/>
  <path d="M1083.7 1573.5 V1582.6 M1090.3 1566 V1591 M1097.4 1580.8 Q1097.4 1585 1090.3 1585"/>
  <!-- rocket -->
  <path d="M1162.5 1566.5 Q1150 1567 1145 1578 L1150.5 1583.5 Q1162 1579 1162.5 1566.5 Z M1146.5 1576 L1139.5 1576.5 M1152.5 1582 L1152 1589 L1155 1584.5 M1139.5 1582.5 V1589.5 H1146"/>
  <circle cx="1154.5" cy="1574.5" r="1.6" fill="#586E75" stroke="none"/>
  <!-- plug -->
  <path d="M1174 1578 L1179.5 1572.5 Q1184 1569 1187 1572 Q1190 1575 1186.5 1579.5 L1181 1585 Z M1190 1566 L1186 1570 M1176.5 1583 L1168 1589.5 M1175 1575 L1172 1578 M1180.5 1580.5 L1177.5 1583.5"/>
  <!-- person -->
  <circle cx="1370.9" cy="1569" r="2.6"/>
  <path d="M1367 1589 V1582 H1366.2 V1575 Q1366.2 1573.3 1368 1573.3 H1373.8 Q1375.6 1573.3 1375.6 1575 V1582 H1374.8 V1589 Z"/>
  <path d="M1427.5 1570 L1434 1578 L1427.5 1586"/>
  <!-- error -->
  <circle cx="1631.6" cy="1577.8" r="11.2" stroke-width="1.9"/>
  <path d="M1626.8 1573 L1636.4 1582.6 M1636.4 1573 L1626.8 1582.6" stroke-width="1.9"/>
  <!-- warning -->
  <path d="M1703.5 1566.5 L1715 1587.5 H1692 Z" stroke-width="1.9" stroke-linejoin="round"/>
  <path d="M1703.5 1574 V1581" stroke-width="2.2"/>
  <circle cx="1703.5" cy="1584.2" r="1.2" fill="#586E75" stroke="none"/>
  <!-- info -->
  <circle cx="1775.2" cy="1577.8" r="11.2" stroke-width="1.9"/>
  <path d="M1775.2 1576 V1583.5" stroke-width="2.2"/>
  <circle cx="1775.2" cy="1572" r="1.3" fill="#586E75" stroke="none"/>
  <!-- broadcast -->
  <path d="M1866 1568 Q1862 1572 1862 1576.5 Q1862 1581 1866 1585 M1869.5 1571 Q1867.5 1573.5 1867.5 1576.5 Q1867.5 1579.5 1869.5 1582 M1880 1568 Q1884 1572 1884 1576.5 Q1884 1581 1880 1585 M1876.5 1571 Q1878.5 1573.5 1878.5 1576.5 Q1878.5 1579.5 1876.5 1582" stroke-width="1.7"/>
  <circle cx="1873" cy="1573.5" r="2.2" stroke-width="1.7"/>
  <path d="M1873 1576 L1867 1590 M1873 1576 L1879 1590 M1869.5 1584 H1876.5" stroke-width="1.7"/>
  <!-- braces -->
  <path d="M1989 1567 Q1986.5 1567 1986.5 1569.5 V1575.5 Q1986.5 1578 1984.5 1578 Q1986.5 1578 1986.5 1580.5 V1586.5 Q1986.5 1589 1989 1589 M2001.5 1567 Q2004 1567 2004 1569.5 V1575.5 Q2004 1578 2006 1578 Q2004 1578 2004 1580.5 V1586.5 Q2004 1589 2001.5 1589" stroke-width="1.7"/>
  <!-- go live -->
  <path d="M2199 1586 Q2194 1582 2194 1576.5 Q2194 1566.5 2204.5 1566.5 Q2215 1566.5 2215 1576.5 Q2215 1582 2210 1586 M2201 1581.5 Q2198.5 1579.5 2198.5 1576.5 Q2198.5 1571 2204.5 1571 Q2210.5 1571 2210.5 1576.5 Q2210.5 1579.5 2208 1581.5" stroke-width="1.8"/>
  <!-- bell -->
  <path d="M2357.5 1567.5 Q2350 1567.5 2350 1576 Q2350 1583 2346.5 1587.5 H2367.5 Q2365 1584 2364.5 1579" stroke-width="1.9"/>
 </g>
 <g fill="#586E75">
  <circle cx="2204.5" cy="1576.5" r="2.3"/>
  <rect x="2203" y="1578" width="3" height="12" rx="1.2"/>
  <circle cx="2363.5" cy="1570.5" r="4.6"/>
  <path d="M2354 1588 Q2354 1591 2357 1591 Q2360 1591 2360 1588 Z"/>
  <!-- copilot status -->
  <path d="M2130.5 1582 C2130.5 1576.5 2134 1575 2136 1575 L2153 1575 C2155 1575 2158.8 1576.5 2158.8 1582 C2158.8 1586.5 2152.5 1589.7 2144.6 1589.7 C2136.7 1589.7 2130.5 1586.5 2130.5 1582 Z M2136.5 1577.5 V1585.2 C2139 1586.6 2141.5 1587 2144.6 1587 C2147.7 1587 2150.3 1586.6 2152.7 1585.2 V1577.5 Z"/>
  <rect x="2140.5" y="1579" width="2.6" height="5" rx="1.3"/>
  <rect x="2146.3" y="1579" width="2.6" height="5" rx="1.3"/>
 </g>
 <g fill="none" stroke="#586E75" stroke-width="2.5">
  <path d="M2139 1567 C2142.5 1567 2143.8 1568.7 2143.8 1572 C2143.8 1575.5 2142 1576.6 2139 1576.6 C2135.8 1576.6 2134 1575.5 2134 1572 C2134 1568.7 2135.5 1567 2139 1567 Z"/>
  <path d="M2150 1567 C2153.5 1567 2155 1568.7 2155 1572 C2155 1575.5 2153.2 1576.6 2150 1576.6 C2147 1576.6 2145.3 1575.5 2145.3 1572 C2145.3 1568.7 2146.6 1567 2150 1567 Z"/>
 </g>
</svg>

<!-- HEADER ICONS + OVERLAY -->
<svg class="abs" style="left:1000px;top:70px" width="222" height="200" viewBox="1000 70 222 200">
 <rect x="1110" y="142" width="40" height="40" rx="6" fill="rgba(0,0,0,0.045)"/>
 <g fill="none" stroke="#333" stroke-width="2.4" stroke-linejoin="round">
  <g transform="translate(1081.9,161.9)">
   <path d="M-3.26 -9.46 L-2.62 -15.68 L2.62 -15.68 L3.26 -9.46 L4.38 -8.99 L9.23 -12.94 L12.94 -9.23 L8.99 -4.38 L9.46 -3.26 L15.68 -2.62 L15.68 2.62 L9.46 3.26 L8.99 4.38 L12.94 9.23 L9.23 12.94 L4.38 8.99 L3.26 9.46 L2.62 15.68 L-2.62 15.68 L-3.26 9.46 L-4.38 8.99 L-9.23 12.94 L-12.94 9.23 L-8.99 4.38 L-9.46 3.26 L-15.68 2.62 L-15.68 -2.62 L-9.46 -3.26 L-8.99 -4.38 L-12.94 -9.23 L-9.23 -12.94 L-4.38 -8.99 Z"/>
   <circle cx="0" cy="0" r="3.7"/>
  </g>
  <path d="M1124.5 149.5 A11 11 0 1 0 1136 149.7"/>
  <path d="M1118 149.8 H1125.5 V157"/>
  <circle cx="1176.9" cy="161" r="12.6"/>
  <path d="M1173 157.5 Q1173 152.5 1177 152.5 Q1181 152.5 1181 156.5 Q1181 159 1178.5 160.5 Q1177 161.5 1177 164.5" stroke-width="2.2"/>
 </g>
 <circle cx="1177" cy="168.5" r="1.5" fill="#333"/>
 <circle cx="1125.3" cy="155.2" r="70" fill="rgba(221,193,70,0.52)"/>
 <g transform="translate(1126,153.8)">
  <path d="M0 0 V78.6 L17.8 61.3 L28.7 80.3 Q30 82 32 81.2 L41.3 76.9 Q43 76 42 74 L34.4 52.8 H54 Z" fill="#FFFFFF"/>
  <path d="M4.6 9.2 V66.6 L18.9 52.8 L30.7 76.3 L38.1 72.9 L27 47.7 H43.1 Z" fill="#000000"/>
 </g>
</svg>

<!--CONTENT-->
</div>
</body></html>
